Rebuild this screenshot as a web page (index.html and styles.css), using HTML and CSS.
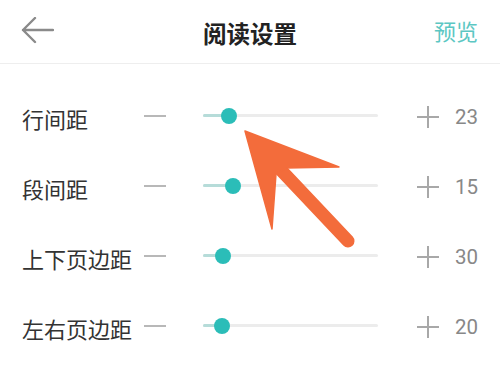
FILE: index.html
```html
<!DOCTYPE html>
<html lang="zh-CN">
<head>
<meta charset="utf-8">
<link rel="stylesheet" href="styles.css">
</head>
<body>
<div class="page">
  <header class="topbar">
    <svg class="back" width="34" height="28" viewBox="0 0 34 28">
      <path d="M33 13H3M15 1L3 13L15 25" fill="none" stroke="#8a8a8a" stroke-width="2.4" stroke-linecap="round" stroke-linejoin="round"/>
    </svg>
    <h1 class="title">阅读设置</h1>
    <span class="preview">预览</span>
  </header>
  <main class="list">
    <div class="row">
      <span class="label">行间距</span>
      <span class="minus"></span>
      <div class="slider"><div class="fill" style="width:26px"></div><div class="thumb" style="left:26px"></div></div>
      <span class="plus"></span>
      <span class="num">23</span>
    </div>
    <div class="row">
      <span class="label">段间距</span>
      <span class="minus"></span>
      <div class="slider"><div class="fill" style="width:30px"></div><div class="thumb" style="left:30px"></div></div>
      <span class="plus"></span>
      <span class="num">15</span>
    </div>
    <div class="row">
      <span class="label">上下页边距</span>
      <span class="minus"></span>
      <div class="slider"><div class="fill" style="width:20px"></div><div class="thumb" style="left:20px"></div></div>
      <span class="plus"></span>
      <span class="num">30</span>
    </div>
    <div class="row">
      <span class="label">左右页边距</span>
      <span class="minus"></span>
      <div class="slider"><div class="fill" style="width:19px"></div><div class="thumb" style="left:19px"></div></div>
      <span class="plus"></span>
      <span class="num">20</span>
    </div>
  </main>
  <svg class="pointer" width="500" height="375" viewBox="0 0 500 375">
    <line x1="279" y1="168" x2="348" y2="241" stroke="#f36c3b" stroke-width="13" stroke-linecap="round"/>
    <polygon points="245,131 339,167 286,168 276,174 272,229" fill="#f36c3b" stroke="#f36c3b" stroke-width="1.5" stroke-linejoin="round"/>
  </svg>
</div>
</body>
</html>
```

FILE: styles.css
```css
* { box-sizing: border-box; }
html, body { margin: 0; padding: 0; background: #fff; }
body {
  width: 500px;
  height: 375px;
  overflow: hidden;
  font-family: "Noto Sans CJK SC", "Noto Sans", sans-serif;
}
.page { position: relative; width: 500px; height: 375px; }
.topbar {
  height: 64px;
  border-bottom: 1px solid #eeeeee;
  display: flex;
  align-items: center;
  justify-content: space-between;
  padding: 0 22px 0 20px;
  position: relative;
}
.back { display: block; margin-top: -2px; }
.title {
  position: absolute;
  left: 0;
  right: 0;
  margin: 0;
  text-align: center;
  font-size: 23.5px;
  font-weight: 700;
  color: #222;
  line-height: 1;
  top: 22px;
  pointer-events: none;
}
.preview {
  font-size: 22px;
  color: #5cc7c3;
  line-height: 1;
  margin-top: -3px;
}
.list { padding-top: 18px; }
.row {
  height: 70px;
  display: flex;
  align-items: center;
  padding-left: 22px;
}
.label {
  width: 122px;
  font-size: 22px;
  color: #333;
  line-height: 1;
  margin-top: 1px;
  white-space: nowrap;
}
.minus {
  width: 22px;
  height: 2px;
  background: #b8b8b8;
  margin-top: -3px;
}
.slider {
  position: relative;
  width: 175px;
  height: 3px;
  background: #ececec;
  margin: -3px 39px 0 37px;
  border-radius: 2px;
}
.fill {
  height: 3px;
  background: #b6dcd9;
  border-radius: 2px;
}
.thumb {
  position: absolute;
  top: 50%;
  width: 16px;
  height: 16px;
  margin: -8px 0 0 -8px;
  border-radius: 50%;
  background: #2bbdb8;
}
.plus {
  position: relative;
  width: 22px;
  height: 22px;
  margin-top: -1px;
}
.plus::before, .plus::after {
  content: "";
  position: absolute;
  background: #a8a8a8;
}
.plus::before { left: 0; right: 0; top: 10px; height: 2px; }
.plus::after { top: 0; bottom: 0; left: 10px; width: 2px; }
.num {
  margin-left: 16px;
  font-family: Roboto, "Noto Sans", sans-serif;
  font-size: 20.5px;
  color: #888;
  line-height: 1;
}
.pointer { position: absolute; left: 0; top: 0; pointer-events: none; }
```
